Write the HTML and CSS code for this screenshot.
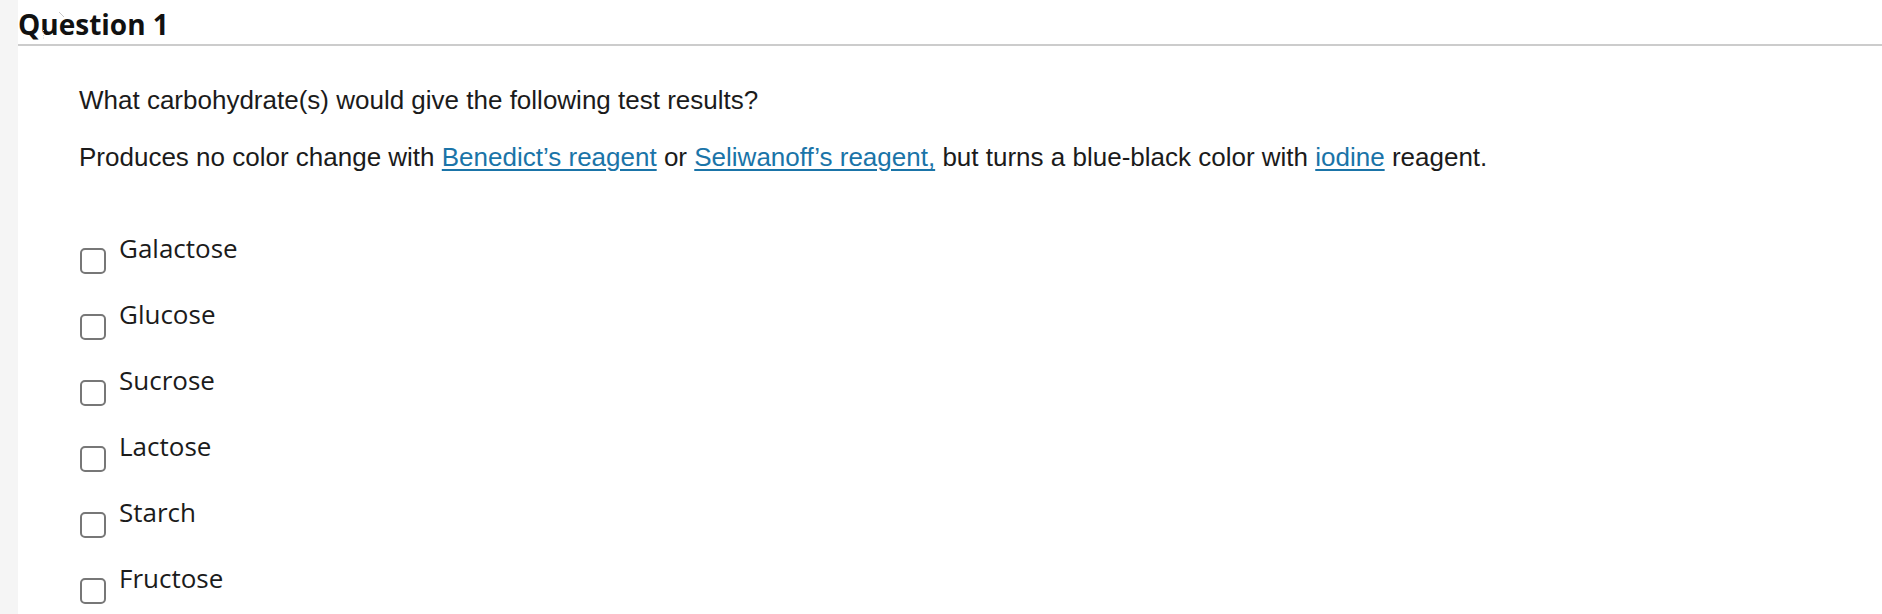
FILE: index.html
```html
<!DOCTYPE html>
<html lang="en">
<head>
<meta charset="utf-8">
<title>Question 1</title>
<link rel="stylesheet" href="styles.css">
</head>
<body>
<div class="page">
  <aside class="rail"></aside>
  <main class="quiz">
    <h2 class="quiz-title">Question 1</h2>
    <svg class="cursor-trace" width="30" height="40" viewBox="0 0 30 40" aria-hidden="true">
      <line x1="16" y1="7" x2="21" y2="12" stroke="#c8c8c8" stroke-width="1"/>
      <line x1="0.5" y1="25" x2="0.5" y2="34" stroke="#d0d0d0" stroke-width="1" stroke-dasharray="1 1.5"/>
    </svg>
    <div class="question-text">
      <p>What carbohydrate(s) would give the following test results?</p>
      <p>Produces no color change with <a href="#">Benedict’s reagent</a> or <a href="#">Seliwanoff’s reagent,</a> but turns a blue-black color with <a href="#">iodine</a> reagent.</p>
    </div>
    <ul class="answers">
      <li class="answer"><span class="box"></span><span class="label">Galactose</span></li>
      <li class="answer"><span class="box"></span><span class="label">Glucose</span></li>
      <li class="answer"><span class="box"></span><span class="label">Sucrose</span></li>
      <li class="answer"><span class="box"></span><span class="label">Lactose</span></li>
      <li class="answer"><span class="box"></span><span class="label">Starch</span></li>
      <li class="answer"><span class="box"></span><span class="label">Fructose</span></li>
    </ul>
  </main>
</div>
</body>
</html>
```

FILE: styles.css
```css
html, body {
  margin: 0;
  padding: 0;
  background: #ffffff;
}

.page {
  display: flex;
  min-height: 614px;
}

.rail {
  width: 18px;
  flex: 0 0 18px;
  background: #f5f5f5;
}

.quiz {
  flex: 1;
  min-width: 0;
  position: relative;
}

.cursor-trace {
  position: absolute;
  left: 25px;
  top: 5px;
}

.quiz-title {
  margin: 0;
  padding: 5px 0 0 0;
  font-family: "Open Sans", "Liberation Sans", sans-serif;
  font-weight: 700;
  font-size: 28px;
  line-height: 39px;
  color: #111111;
  border-bottom: 2px solid #cccccc;
}

.question-text {
  margin: 39px 0 0 0;
  padding-left: 61px;
  font-family: "Liberation Sans", Arial, sans-serif;
  font-size: 26px;
  line-height: 30px;
  color: #1b1b1b;
  display: flex;
  flex-direction: column;
  gap: 27px;
}

.question-text p {
  margin: 0;
}

.question-text a {
  color: #1a74a8;
  text-decoration: underline;
  text-underline-offset: 3px;
  text-decoration-thickness: 2px;
}

.answers {
  list-style: none;
  margin: 58px 0 0 0;
  padding: 0 0 0 62px;
  display: flex;
  flex-direction: column;
  gap: 22px;
}

.answer {
  display: flex;
  align-items: flex-start;
  gap: 13px;
}

.box {
  box-sizing: border-box;
  width: 26px;
  height: 26px;
  margin-top: 18px;
  border: 2px solid #777777;
  border-radius: 5px;
  background: #ffffff;
  flex: 0 0 26px;
}

.label {
  font-family: "Open Sans", "Liberation Sans", sans-serif;
  font-size: 26px;
  line-height: 36px;
  color: #1b1b1b;
}
```
